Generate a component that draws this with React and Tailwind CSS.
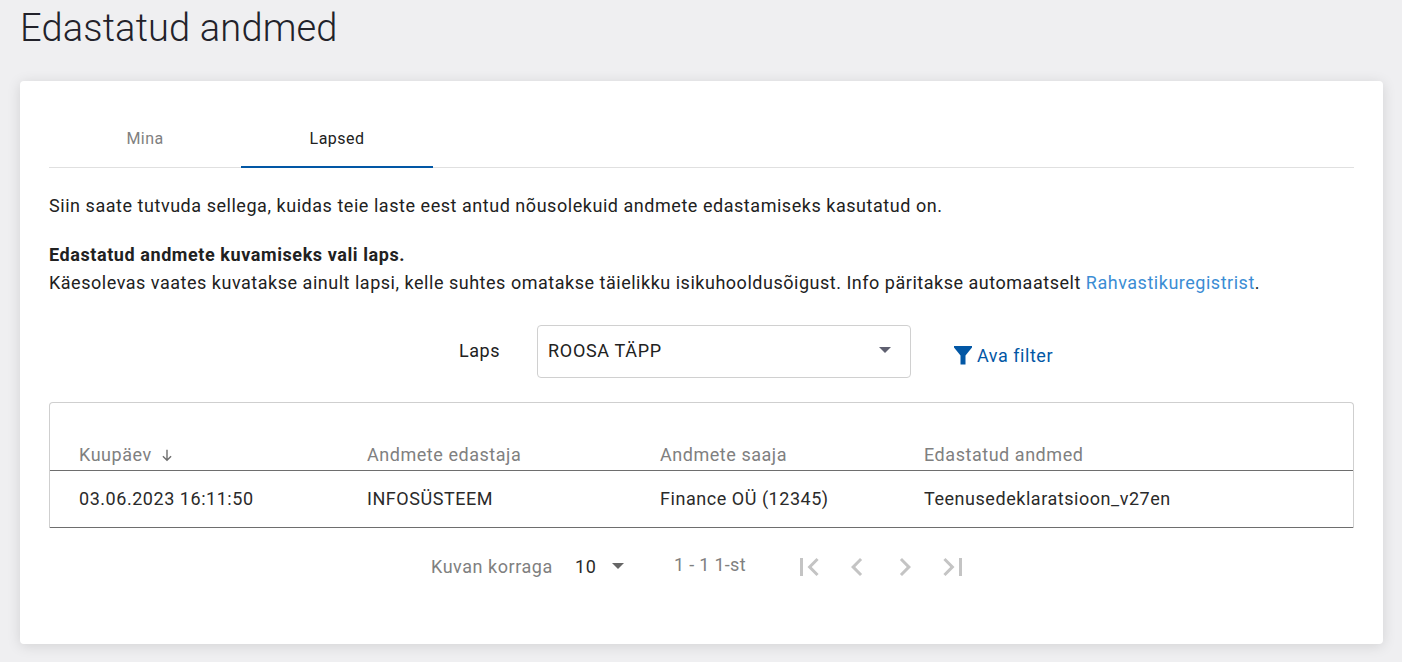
const columns = [
  { label: 'Andmete edastaja', value: 'INFOSÜSTEEM', w: 'w-[293px]' },
  { label: 'Andmete saaja', value: 'Finance OÜ (12345)', w: 'w-[264px]' },
  { label: 'Edastatud andmed', value: 'Teenusedeklaratsioon_v27en', w: 'flex-1' },
];

function PagerIcon({ d }) {
  return (
    <svg width="36" height="36" viewBox="0 0 24 24" fill="#c4c4c4">
      <path d={d} />
    </svg>
  );
}

export default function App() {
  return (
    <div className="h-[662px] overflow-hidden bg-[#efeff1] px-5 font-['Roboto',sans-serif] text-[#212121]">
      {/* Title */}
      <h1 className="pt-[7px] text-[38px] leading-[43px] font-light tracking-[0.17px] text-[#22222a]">
        Edastatud andmed
      </h1>

      {/* Card */}
      <div className="mt-[31px] h-[563px] w-[1363px] rounded bg-white px-[29px] pt-[29px] shadow-[0_2px_14px_rgba(0,0,0,0.12)]">
        {/* Tabs */}
        <div className="flex h-[58px] border-b border-[#e0e0e0]">
          <div className="flex h-[58px] w-[192px] items-center justify-center text-[16px] tracking-[0.45px] text-[#808080]">
            Mina
          </div>
          <div className="flex h-[58px] w-[192px] items-center justify-center border-b-2 border-[#0257a5] pt-[1px] text-[16px] tracking-[0.45px] text-[#212121]">
            Lapsed
          </div>
        </div>

        <div className="text-[18px] tracking-[0.54px]">
          <p className="mt-[26px] leading-6">
            Siin saate tutvuda sellega, kuidas teie laste eest antud nõusolekuid andmete edastamiseks kasutatud on.
          </p>
          <p className="mt-[23px] leading-[28px] font-bold tracking-[0.58px]">Edastatud andmete kuvamiseks vali laps.</p>
          <p className="leading-[28px] tracking-[0.52px]">
            Käesolevas vaates kuvatakse ainult lapsi, kelle suhtes omatakse täielikku isikuhooldusõigust. Info päritakse automaatselt{' '}
            <span className="text-[#3b8dd4]">Rahvastikuregistrist</span>.
          </p>

          {/* Child select */}
          <div className="mt-[28px] flex h-[53px] items-center pl-[410px]">
            <span className="w-[78px] pb-[2px]">Laps</span>
            <div className="flex h-[53px] w-[374px] items-center justify-between rounded border border-[#d0d0d0] pr-[19px] pb-[3px] pl-[10px]">
              <span className="tracking-[0.7px]">ROOSA TÄPP</span>
              <span className="h-0 w-0 border-x-[6px] border-t-[6px] border-x-transparent border-t-[#5f6070]" />
            </div>
            <div className="ml-[42px] flex items-center gap-[4px] pt-[7px] text-[#0257a5]">
              <svg width="20" height="20" viewBox="0 0 20 20" fill="#0257a5">
                <path d="M1 1h18v1.5L12.5 10.5V19.5h-5V10.5L1 2.5z" />
              </svg>
              <span>Ava filter</span>
            </div>
          </div>

          {/* Table */}
          <div className="mt-[24px] rounded-t border-x border-t border-[#cfcfcf]">
            <div className="flex h-[68px] items-end border-b border-[#6e6e6e] pb-[3px] pl-[29px] leading-6 text-[#808080]">
              <div className="flex w-[288px] items-center gap-[8px]">
                Kuupäev
                <svg width="14" height="14" viewBox="0 0 24 24" fill="none" stroke="#6e6e6e" strokeWidth="2.4">
                  <path d="M12 3v18M5 14l7 7 7-7" />
                </svg>
              </div>
              {columns.map((c) => (
                <div key={c.label} className={c.w}>
                  {c.label}
                </div>
              ))}
            </div>
            <div className="flex h-[57px] items-center border-b border-[#6e6e6e] pb-[2px] pl-[29px] text-[#2a2a2a]">
              <div className="w-[288px]">03.06.2023 16:11:50</div>
              {columns.map((c) => (
                <div key={c.label} className={c.w}>
                  {c.value}
                </div>
              ))}
            </div>
          </div>

          {/* Pagination */}
          <div className="mt-[25px] flex h-[26px] items-center pl-[382px]">
            <span className="w-[144px] text-[#808080]">Kuvan korraga</span>
            <span className="w-[37px] text-[#2a2a2a]">10</span>
            <span className="h-0 w-0 border-x-[6px] border-t-[6px] border-x-transparent border-t-[#666666]" />
            <span className="ml-[50px] w-[117px] pb-[4px] tracking-[0.3px] text-[#808080]">1 - 1 1-st</span>
            <div className="mt-[2px] flex gap-3">
              <PagerIcon d="M18.41 16.59 13.82 12l4.59-4.59L17 6l-6 6 6 6zM6 6h2v12H6z" />
              <PagerIcon d="M15.41 7.41 14 6l-6 6 6 6 1.41-1.41L10.83 12z" />
              <PagerIcon d="M10 6 8.59 7.41 13.17 12l-4.58 4.59L10 18l6-6z" />
              <PagerIcon d="M5.59 7.41 10.18 12l-4.59 4.59L7 18l6-6-6-6zM16 6h2v12h-2z" />
            </div>
          </div>
        </div>
      </div>
    </div>
  );
}
